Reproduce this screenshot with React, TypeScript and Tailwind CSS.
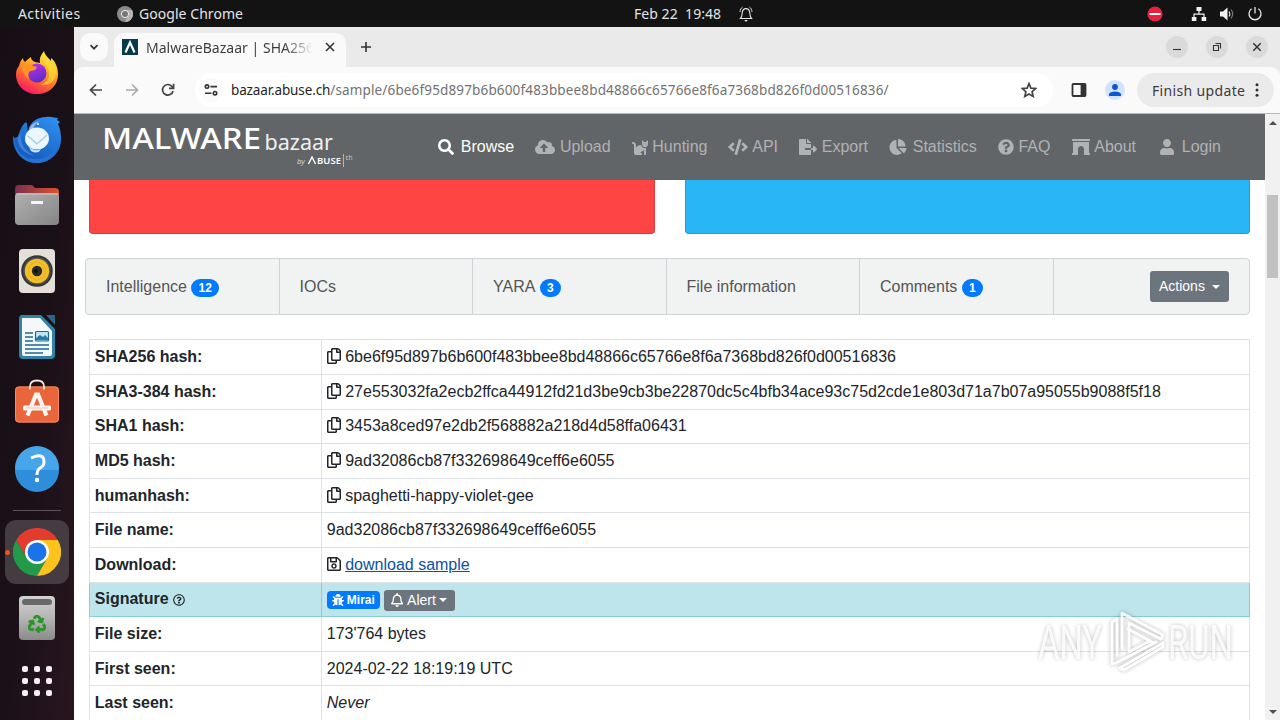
import type { ReactNode } from "react";
import {
  FaArchway,
  FaBug,
  FaCat,
  FaChartPie,
  FaCloudUploadAlt,
  FaCode,
  FaFileExport,
  FaQuestionCircle,
  FaRecycle,
  FaRegBell,
  FaRegCopy,
  FaRegQuestionCircle,
  FaRegSave,
  FaSearch,
  FaUser,
} from "react-icons/fa";

/** GNOME top bar */
function TopBar() {
  return (
    <header className="flex h-[27px] shrink-0 items-center bg-[#131313] font-['Noto_Sans',sans-serif] text-[14px] text-[#e4e4e4]">
      <span className="ml-[18px] w-[99px] tracking-[0.42px]">Activities</span>
      <svg className="mr-[6px] size-4" viewBox="0 0 16 16">
        <circle cx="8" cy="8" r="8" fill="#8b8b8b" />
        <path d="M8 4H15A8 8 0 0 1 8 16L11 10Z" fill="#b5b5b5" />
        <circle cx="8" cy="8" r="3.6" fill="#777" stroke="#eee" strokeWidth="1" />
      </svg>
      <span className="w-[495px] tracking-[0.05px]">Google Chrome</span>
      <span className="w-[104px] whitespace-pre tracking-[0.05px]">Feb 22  19:48</span>
      <svg className="size-4" viewBox="0 0 16 16" fill="none" stroke="#e4e4e4" strokeWidth="1.1">
        <path d="M2.5 12.5H13.5C12 11 12 9.5 11.8 7C11.6 4 10 2.6 8 2.6S4.4 4 4.2 7C4 9.5 4 11 2.5 12.5Z" />
        <path d="M2 6C2.2 3.6 3 2 4.6 1M14 6C13.8 3.6 13 2 11.4 1" strokeWidth="0.9" />
        <path d="M6.2 14H9.8L8 16Z" fill="#e4e4e4" stroke="none" />
      </svg>
      <svg className="ml-auto size-4" viewBox="0 0 16 16">
        <circle cx="8" cy="8" r="7.6" fill="#e6213f" />
        <path d="M2.5 8H13.5" stroke="#fff" strokeWidth="2" />
      </svg>
      <svg className="ml-[28px] size-4" viewBox="0 0 16 16">
        <path d="M5.5 1h5v4h-5zM.8 11h4.6v4H.8zM10.6 11h4.6v4h-4.6z" fill="#f2f2f2" />
        <path d="M8 5V8M3 11V8.2H13V11" fill="none" stroke="#f2f2f2" strokeWidth="1.2" />
      </svg>
      <svg className="ml-[12px] size-4" viewBox="0 0 16 16">
        <path d="M1 5.5H4L8.5 1.5V14.5L4 10.5H1Z" fill="#f2f2f2" />
        <path d="M10 5.5Q11.8 8 10 10.5" fill="none" stroke="#ddd" strokeWidth="1.2" />
        <path d="M12 3.5Q15.4 8 12 12.5" fill="none" stroke="#777" strokeWidth="1.2" />
      </svg>
      <svg className="ml-[12px] mr-[17.5px] size-4" viewBox="0 0 16 16" fill="none" stroke="#e6e6e6" strokeWidth="1.3">
        <path d="M4.6 2.8A6 6 0 1 0 11.4 2.8M8 1V7.5" />
      </svg>
    </header>
  );
}

function FirefoxIcon() {
  return (
    <svg className="size-12" viewBox="0 0 48 48">
      <defs>
        <linearGradient id="fx-body" x1="0.8" y1="0" x2="0.3" y2="1">
          <stop offset="0" stopColor="#fff44f" />
          <stop offset="0.35" stopColor="#ffb62a" />
          <stop offset="0.65" stopColor="#ff6a2c" />
          <stop offset="1" stopColor="#f5156c" />
        </linearGradient>
        <linearGradient id="fx-globe" x1="0.3" y1="0" x2="0.7" y2="1">
          <stop offset="0" stopColor="#b833e1" />
          <stop offset="1" stopColor="#592acb" />
        </linearGradient>
      </defs>
      <path
        d="M6 17C7 13 8 11 10 9C10 11 11 12 12 13C14 11 16 9 18 8C18 11 20 12 22 13L27 14C26 8 29 5 31 2C32 7 36 9 38 12C38 11 38 10 38 9C42 12 45 18 45 25C45 37 36 45 24 45S3 37 3 25C3 22 4 19 6 17Z"
        fill="url(#fx-body)"
      />
      <circle cx="24" cy="24" r="9.5" fill="url(#fx-globe)" />
      <path d="M9 15C14 13 17 14 20 17L24 18C23 21 20 22 17 22C15 24 15 26 16 30C11 27 9 22 9 15Z" fill="#ff9425" />
      <path d="M29 8C30 14 37 17 36 27C35 32 31 35 27 36C38 37 43 31 43 22C42 14 35 13 31 5Z" fill="#ffdf39" opacity=".65" />
    </svg>
  );
}

function ThunderbirdIcon() {
  return (
    <svg className="size-12" viewBox="0 -1 48 48">
      <defs>
        <linearGradient id="tb-body" x1="0.8" y1="0" x2="0.2" y2="1">
          <stop offset="0" stopColor="#2e8ff0" />
          <stop offset="1" stopColor="#1353b5" />
        </linearGradient>
      </defs>
      <path
        d="M0 20C2 23 3 22 5 20C7 15 8 10 13 6C15 8 14 13 15 15C17 6 24 1 33 1C38 0 42 2 45 2L44 4L47 6L45 8C47 12 48 17 48 23C48 37 37 47 24 47C9 47-1 35 0 20Z"
        fill="url(#tb-body)"
      />
      <path d="M1 21C2 37 13 44 25 43C36 42 43 35 44 25C46 38 36 47 24 47C9 47 0 35 1 21Z" fill="#2472d2" />
      <path d="M8 17C6 28 13 36 22 40C11 38 4 30 5 22Z" fill="#63aef7" opacity=".45" />
      <path d="M16 13Q19 6 27 5Q21 8 20 14Z" fill="#9db5ef" />
      <ellipse cx="24" cy="22.5" rx="12" ry="11" fill="#eaf7fd" />
      <path d="M15 20L24 28L34 19" fill="none" stroke="#a7cbd9" strokeWidth="1.2" />
      <path d="M16 31Q22 36 28 33Q25 39 18 35Z" fill="#bfe5fa" />
      <circle cx="25" cy="8" r="1" fill="#dff" />
    </svg>
  );
}

function FilesIcon() {
  return (
    <svg className="size-12" viewBox="0 0 48 48">
      <defs>
        <linearGradient id="fi-tab">
          <stop offset="0" stopColor="#78304f" />
          <stop offset="1" stopColor="#e2512a" />
        </linearGradient>
        <linearGradient id="fi-body" x1="0" y1="0" x2="1" y2="1">
          <stop offset="0" stopColor="#b0b0b0" />
          <stop offset="1" stopColor="#858585" />
        </linearGradient>
      </defs>
      <path d="M2 8Q2 4 6 4H18Q20 4 22 7H42Q46 7 46 11V30H2Z" fill="url(#fi-tab)" />
      <rect x="2" y="12" width="44" height="32" rx="4" fill="url(#fi-body)" />
      <path d="M3 13H45" stroke="#c9c9c9" strokeWidth="1" />
      <rect x="18" y="20" width="12" height="3" fill="#f5f5f5" />
    </svg>
  );
}

function RhythmboxIcon() {
  return (
    <svg className="size-12" viewBox="0 0 48 48">
      <rect x="6" y="2" width="36" height="44" rx="4" fill="#e4dfd9" />
      <circle cx="24" cy="24" r="15.8" fill="#343738" />
      <circle cx="24" cy="24" r="13.8" fill="#4b4f51" />
      <circle cx="24" cy="24" r="12.2" fill="#f4c02a" />
      <circle cx="24" cy="24" r="8.7" fill="none" stroke="#ecb420" strokeWidth="1.6" />
      <circle cx="24" cy="24" r="5.2" fill="#282b2e" />
      <circle cx="23" cy="24" r="2" fill="#111" />
    </svg>
  );
}

function WriterIcon() {
  return (
    <svg className="size-12" viewBox="0 0 48 48">
      <path d="M9 2H28L42 16V42Q42 46 38 46H10Q6 46 6 42V6Q6 2 9 2Z" fill="#3083a8" />
      <path d="M9 5H27L39 18V41Q39 43 37 43H11Q9 43 9 41Z" fill="#f5f8fa" />
      <path d="M33 2H42V12Z" fill="#296688" />
      <path d="M12 20H20M12 24H20M12 28H20M12 32H36M12 36H36M12 40H30" stroke="#1e678e" strokeWidth="1.7" />
      <rect x="22.5" y="18.5" width="13" height="9.5" rx="1" fill="#bfe4f3" stroke="#1f688f" strokeWidth="1.2" />
      <path d="M23 27V25L27 22L30 24L32 22L35 25V27Z" fill="#267ca6" />
    </svg>
  );
}

function SoftwareIcon() {
  return (
    <svg className="size-12" viewBox="0 1.5 48 48">
      <rect x="2" y="9" width="44" height="36" rx="4" fill="#e9653a" />
      <rect x="2.5" y="9.5" width="43" height="35" rx="3.5" fill="none" stroke="#f58a60" />
      <path d="M17 12V9Q17 3 24 3T31 9V12" fill="none" stroke="#f7e4dc" strokeWidth="1.8" />
      <path d="M14.5 38L23 17H25L33.5 38" fill="none" stroke="#fff6f2" strokeWidth="4.2" />
      <rect x="10" y="28" width="28" height="5" rx="1.5" fill="#fff6f2" />
      <path d="M13 30.5H35" stroke="#e7a289" strokeWidth="0.6" />
    </svg>
  );
}

function HelpIcon() {
  return (
    <svg className="size-12" viewBox="0 1 48 48">
      <circle cx="24" cy="24" r="22" fill="#47a5ea" />
      <path d="M2 26H46A22 22 0 0 1 2 26Z" fill="#2f8edb" />
      <path d="M18 14Q31 8 31 18Q31 22 27 24Q24 26 24 31" fill="none" stroke="#fff" strokeWidth="3" />
      <circle cx="24" cy="36" r="2.2" fill="#fff" />
    </svg>
  );
}

function ChromeIcon() {
  return (
    <svg className="size-12" viewBox="0 0 48 48">
      <path d="M24 12H44.8A24 24 0 0 0 3.2 12L13.6 30Z" fill="#e33b2e" />
      <path d="M3.2 12A24 24 0 0 0 24 48L34.4 30H13.6Z" fill="#229a49" />
      <path d="M44.8 12H24L34.4 30L24 48A24 24 0 0 0 44.8 12Z" fill="#fcc31e" />
      <circle cx="24" cy="24" r="12" fill="#fff" />
      <circle cx="24" cy="24" r="9.5" fill="#1a73e8" />
    </svg>
  );
}

function TrashIcon() {
  return (
    <div className="flex h-11 w-9 flex-col items-center rounded-[4px] bg-linear-to-b from-[#d2d2d2] via-[#b5b5b5] to-[#8a8a8a] pt-[3px]">
      <div className="h-[6px] w-[30px] rounded-[3px] bg-[#696969]" />
      <FaRecycle className="mt-[10px] size-[18px] stroke-[#2a9523] stroke-[24px] text-[#2a9523]" />
    </div>
  );
}

const dockIcons = [FirefoxIcon, ThunderbirdIcon, FilesIcon, RhythmboxIcon, WriterIcon, SoftwareIcon, HelpIcon];

function Dock() {
  return (
    <aside className="flex w-[74px] shrink-0 flex-col items-center bg-linear-to-br from-[#160e15] via-[#1a1018] to-[#29151f] pt-[13px]">
      {dockIcons.map((Icon, i) => (
        <div key={i} className="flex h-[66px] shrink-0 items-center">
          <Icon />
        </div>
      ))}
      <div className="my-2 h-px w-12 shrink-0 bg-[#5c5459]" />
      <div className="relative mt-px flex size-16 shrink-0 items-center justify-center rounded-[11px] bg-[#453c42]">
        <span className="absolute left-0 size-[5px] rounded-full bg-[#e95420]" />
        <ChromeIcon />
      </div>
      <div className="mt-px flex h-[66px] shrink-0 items-center">
        <TrashIcon />
      </div>
      <div className="mt-[15px] grid grid-cols-3 gap-[6px]">
        {Array.from({ length: 9 }, (_, i) => (
          <span key={i} className="size-[6px] rounded-[2px] bg-[#f5eff3]" />
        ))}
      </div>
    </aside>
  );
}

function WindowButton({ children }: { children: ReactNode }) {
  return (
    <span className="flex size-[22px] items-center justify-center rounded-full bg-[#dadada]">
      <svg className="size-3" viewBox="0 0 12 12" fill="none" stroke="#333" strokeWidth="1.1">
        {children}
      </svg>
    </span>
  );
}

function TabStrip() {
  return (
    <div className="flex h-10 shrink-0 items-center bg-[#eaeaea] pl-[6px] font-['Noto_Sans',sans-serif]">
      <span className="flex size-7 items-center justify-center rounded-[10px] bg-[#fafafa]">
        <svg className="size-3" viewBox="0 0 12 12" fill="none" stroke="#333" strokeWidth="1.7">
          <path d="M2.5 4.2L6 7.7L9.5 4.2" />
        </svg>
      </span>
      <div className="mt-[6px] ml-[6px] flex h-[34px] w-[232px] items-center rounded-t-[10px] bg-[#fafafa] pb-[6px] pl-2">
        <svg className="size-4" viewBox="0 0 16 16">
          <rect width="16" height="16" fill="#043a4c" />
          <path d="M3.5 13.5L8 3.5L12.5 13.5" fill="none" stroke="#fff" strokeWidth="2.2" />
        </svg>
        <span className="ml-2 w-[167px] overflow-hidden bg-linear-to-r from-[#3a3a3a] from-83% to-transparent bg-clip-text text-[14px] tracking-[0.03px] whitespace-nowrap text-transparent">
          MalwareBazaar | SHA256
        </span>
        <svg className="ml-[11px] size-3" viewBox="0 0 12 12" fill="none" stroke="#333" strokeWidth="1.6">
          <path d="M2 2L10 10M10 2L2 10" />
        </svg>
      </div>
      <svg className="ml-[14px] size-3" viewBox="0 0 12 12" fill="none" stroke="#333" strokeWidth="1.6">
        <path d="M6 1V11M1 6H11" />
      </svg>
      <div className="mr-[12px] ml-auto flex gap-[18px]">
        <WindowButton>
          <path d="M2 8.5H10" />
        </WindowButton>
        <WindowButton>
          <path d="M2.5 4.5H7.5V9.5H2.5ZM4.5 2.5H9.5V7.5" />
        </WindowButton>
        <WindowButton>
          <path d="M2.3 2.3L9.7 9.7M9.7 2.3L2.3 9.7" strokeWidth="1.5" />
        </WindowButton>
      </div>
    </div>
  );
}

function Toolbar() {
  return (
    <div className="bg-[#eaeaea]">
      <div className="flex h-[47px] shrink-0 items-center rounded-t-[9px] border-b border-[#b4bcbf] bg-[#fafafa] font-['Noto_Sans',sans-serif]">
        <svg className="ml-[14px] size-4" viewBox="0 0 16 16" fill="none" stroke="#444" strokeWidth="1.7">
          <path d="M14 8H3M8 2.5L2.5 8L8 13.5" />
        </svg>
        <svg className="ml-[20px] size-4" viewBox="0 0 16 16" fill="none" stroke="#aaa" strokeWidth="1.7">
          <path d="M2 8H13M8 2.5L13.5 8L8 13.5" />
        </svg>
        <svg className="ml-[20px] size-4" viewBox="0 0 16 16" fill="none" stroke="#444" strokeWidth="1.7">
          <path d="M13 9A5.3 5.3 0 1 1 11.8 4.3L13.3 6M13.6 1.8V6.3H9" />
        </svg>
        <div className="ml-[19px] flex h-[34px] w-[858px] items-center rounded-full bg-white pl-1">
          <span className="flex size-6 items-center justify-center rounded-full bg-[#fafafa]">
            <svg className="size-[14px]" viewBox="0 0 14 14" fill="none" stroke="#333" strokeWidth="1.6">
              <circle cx="3" cy="3.6" r="1.7" />
              <path d="M6.5 3.6H13M1 10.2H7.5" />
              <circle cx="11" cy="10.2" r="1.7" />
            </svg>
          </span>
          <span className="ml-2 w-[790px] text-[13.5px] tracking-[0.15px] whitespace-nowrap text-[#727272]">
            <span className="tracking-[-0.13px] text-[#1f1f1f]">bazaar.abuse.ch</span>
            /sample/6be6f95d897b6b600f483bbee8bd48866c65766e8f6a7368bd826f0d00516836/
          </span>
          <svg className="size-4" viewBox="0 0 16 16" fill="none" stroke="#444" strokeWidth="1.7">
            <path d="M8 1.6L9.9 6.1L14.7 6.5L11.1 9.7L12.2 14.4L8 11.9L3.8 14.4L4.9 9.7L1.3 6.5L6.1 6.1Z" />
          </svg>
        </div>
        <svg className="ml-[18px] size-4" viewBox="0 0 16 16">
          <rect x="1.5" y="2" width="13" height="12" rx="0.8" fill="none" stroke="#333" strokeWidth="1.8" />
          <path d="M9.6 2H14.5V14H9.6Z" fill="#333" />
        </svg>
        <span className="ml-[18px] flex size-5 items-center justify-center rounded-full bg-[#d3e3fd]">
          <svg className="size-[14px]" viewBox="0 0 14 14" fill="#0b57d0">
            <circle cx="7" cy="4" r="2.9" />
            <path d="M1 13V11Q2 8.4 7 8.4T13 11V13Z" />
          </svg>
        </span>
        <span className="ml-[12px] flex h-[34px] w-[137px] items-center rounded-full bg-[#ebebeb] pl-[15px] text-[14px] text-[#3c3c3c]">
          <span className="w-[96px] tracking-[0.35px] whitespace-nowrap">Finish update</span>
          <svg className="ml-[1px] size-4" viewBox="0 0 16 16" fill="#333">
            <circle cx="8" cy="2.8" r="1.5" />
            <circle cx="8" cy="8" r="1.5" />
            <circle cx="8" cy="13.2" r="1.5" />
          </svg>
        </span>
      </div>
    </div>
  );
}

function Logo() {
  return (
    <svg
      className="ml-[26px] h-[66px] w-[256px] overflow-visible font-['Noto_Sans',sans-serif]"
      viewBox="0 0 256 66"
      fill="#fff"
    >
      <text x="2" y="35" fontSize="29.5" fontWeight="500" textLength="159" lengthAdjust="spacingAndGlyphs">
        MALWARE
      </text>
      <text x="164.5" y="36" fontSize="21" fontWeight="400" fill="#eff0f0" textLength="68.5" lengthAdjust="spacingAndGlyphs">
        bazaar
      </text>
      <text x="197" y="50" fontSize="7.5" fontStyle="italic" fill="#d5d6d7">
        by
      </text>
      <path d="M208.5 50L212 43L215.5 50" fill="none" stroke="#fff" strokeWidth="1.4" />
      <text x="217" y="50" fontSize="9.5" fontWeight="600" textLength="24">
        BUSE
      </text>
      <path d="M243.5 40V53" stroke="#c9cacb" strokeWidth="0.8" />
      <text x="245.5" y="46" fontSize="6.5" fill="#c9cacb">
        ch
      </text>
    </svg>
  );
}

const navItems = [
  { label: "Browse", icon: <FaSearch className="mx-[2px] size-4" />, active: true },
  { label: "Upload", icon: <FaCloudUploadAlt className="h-4 w-5" /> },
  { label: "Hunting", icon: <FaCat className="size-4" /> },
  { label: "API", icon: <FaCode className="-ml-px h-4 w-5" /> },
  { label: "Export", icon: <FaFileExport className="h-4 w-[18px]" /> },
  { label: "Statistics", icon: <FaChartPie className="mr-px h-4 w-[18px]" /> },
  { label: "FAQ", icon: <FaQuestionCircle className="size-4" /> },
  { label: "About", icon: <FaArchway className="h-4 w-[18px]" /> },
  { label: "Login", icon: <FaUser className="mx-[3px] h-4 w-[14px]" /> },
];

function SiteNav() {
  return (
    <nav className="flex h-[66px] shrink-0 items-center bg-[#626567]">
      <Logo />
      <ul className="ml-[80.4px] flex gap-[21.35px]">
        {navItems.map((item) => (
          <li
            key={item.label}
            className={`flex items-center gap-[4.4px] whitespace-nowrap ${item.active ? "text-white" : "text-[#b0b2b3]"}`}
          >
            {item.icon}
            <span>{item.label}</span>
          </li>
        ))}
      </ul>
    </nav>
  );
}

function Caret({ className = "" }: { className?: string }) {
  return <span className={`inline-block border-x-4 border-t-4 border-x-transparent border-t-white ${className}`} />;
}

const sections = [
  { label: "Intelligence", count: 12 },
  { label: "IOCs" },
  { label: "YARA", count: 3 },
  { label: "File information" },
  { label: "Comments", count: 1 },
];

function SectionTabs() {
  return (
    <div className="mt-6 mr-[15px] ml-[11px] flex h-[57px] shrink-0 rounded-[4px] border border-[#cfd3d5] bg-[#f1f3f3] text-[#555]">
      {sections.map((section) => (
        <div key={section.label} className="flex w-[193.5px] items-center border-r border-[#cfd3d5] pl-5">
          {section.label}
          {section.count && (
            <span className="mt-[2px] ml-[4.4px] rounded-full bg-[#007bff] px-[7.2px] py-[3px] text-[12px] leading-3 font-bold text-white">
              {section.count}
            </span>
          )}
        </div>
      ))}
      <div className="flex flex-1 items-center justify-end pr-5">
        <span className="flex h-[31px] w-[79px] items-center rounded-[3px] bg-[#6c757d] pl-[9px] text-[14px] text-white">
          Actions
          <Caret className="ml-[7px]" />
        </span>
      </div>
    </div>
  );
}

function Hash({ children }: { children: string }) {
  return (
    <span className="flex items-center gap-[4.4px]">
      <FaRegCopy className="h-4 w-[14px] -translate-y-px" />
      {children}
    </span>
  );
}

const rows: { label: ReactNode; value: ReactNode; info?: boolean }[] = [
  { label: "SHA256 hash:", value: <Hash>6be6f95d897b6b600f483bbee8bd48866c65766e8f6a7368bd826f0d00516836</Hash> },
  {
    label: "SHA3-384 hash:",
    value: <Hash>27e553032fa2ecb2ffca44912fd21d3be9cb3be22870dc5c4bfb34ace93c75d2cde1e803d71a7b07a95055b9088f5f18</Hash>,
  },
  { label: "SHA1 hash:", value: <Hash>3453a8ced97e2db2f568882a218d4d58ffa06431</Hash> },
  { label: "MD5 hash:", value: <Hash>9ad32086cb87f332698649ceff6e6055</Hash> },
  { label: "humanhash:", value: <Hash>spaghetti-happy-violet-gee</Hash> },
  { label: "File name:", value: "9ad32086cb87f332698649ceff6e6055" },
  {
    label: "Download:",
    value: (
      <span className="flex items-center gap-[4.4px]">
        <FaRegSave className="h-4 w-[14px] -translate-y-px" />
        <a className="text-[#0b51a1] underline">download sample</a>
      </span>
    ),
  },
  {
    label: (
      <span className="flex items-center gap-[4.4px]">
        Signature <FaRegQuestionCircle className="mt-px size-3" />
      </span>
    ),
    value: (
      <span className="flex h-6 items-center gap-1 pt-[1.6px] text-white">
        <span className="flex h-[18px] w-[53px] items-center gap-[3px] rounded-[4px] bg-[#007bff] pl-[5px] text-[12px] font-bold">
          <FaBug className="size-3" /> Mirai
        </span>
        <span className="flex h-[21px] w-[71px] items-center rounded-[3px] bg-[#6c757d] pl-[7px] text-[14px]">
          <FaRegBell className="mr-[4px] h-[14px] w-[12.25px]" /> Alert
          <Caret className="ml-[3px]" />
        </span>
      </span>
    ),
    info: true,
  },
  { label: "File size:", value: "173'764 bytes" },
  { label: "First seen:", value: "2024-02-22 18:19:19 UTC" },
  { label: "Last seen:", value: <em>Never</em> },
];

function SampleTable() {
  return (
    <table className="mt-[24.45px] ml-[15px] w-[1161px] table-fixed border-collapse text-left leading-6 text-[#212529]">
      <tbody>
        {rows.map((row, i) => (
          <tr key={i} className={row.info ? "bg-[#bee5eb]" : ""}>
            <th
              className={`w-[232px] border p-[4.8px] font-bold ${row.info ? "border-[#86cfda]" : "border-[#dee2e6]"}`}
            >
              {row.label}
            </th>
            <td className={`border p-[4.8px] ${row.info ? "border-[#86cfda]" : "border-[#dee2e6]"}`}>{row.value}</td>
          </tr>
        ))}
      </tbody>
    </table>
  );
}

function Scrollbar() {
  return (
    <div className="flex w-[15px] shrink-0 flex-col items-center bg-[#f1f1f1]">
      <span className="mt-[7px] border-x-4 border-b-4 border-x-transparent border-b-[#505050]" />
      <span className="mt-[70px] h-[83px] w-[11px] bg-[#c1c1c1]" />
      <span className="mt-auto mb-[6px] border-x-4 border-t-4 border-x-transparent border-t-[#505050]" />
    </div>
  );
}

/** Recorder watermark that lies over the lower right corner */
function Watermark() {
  return (
    <svg
      className="absolute top-[606px] left-[1034px] h-[70px] w-[220px] overflow-visible font-['Roboto',sans-serif] opacity-80 drop-shadow-[0_0_2px_rgba(0,0,0,0.35)]"
      viewBox="0 0 220 70"
      fill="#fff"
      fillOpacity="0.85"
    >
      <text x="4" y="53" fontSize="49" textLength="64" lengthAdjust="spacingAndGlyphs">
        ANY
      </text>
      <text x="134" y="53" fontSize="49" textLength="65" lengthAdjust="spacingAndGlyphs">
        RUN
      </text>
      <g fill="none" stroke="#fff" strokeWidth="2.8" strokeLinejoin="round" strokeLinecap="round">
        <path d="M88 42V7L129 29L127 33L95 17V46L116 35" />
        <path d="M94 23L118 36" />
        <path d="M83 13L78 16V58L82 57L122 36M83 13V49" />
        <path d="M86 62L90 64L129 41V37Z" />
      </g>
    </svg>
  );
}

export default function App() {
  return (
    <div className="relative flex h-[720px] w-[1280px] flex-col overflow-hidden bg-white">
      <TopBar />
      <div className="flex min-h-0 flex-1">
        <Dock />
        <div className="flex min-w-0 flex-1 flex-col">
          <TabStrip />
          <Toolbar />
          <div className="flex min-h-0 flex-1 font-['Liberation_Sans',Arial,sans-serif] text-[16px]">
            <main className="flex min-w-0 flex-1 flex-col overflow-hidden">
              <SiteNav />
              <div className="flex h-[54px] shrink-0 gap-[30px] px-[15px]">
                <div className="flex-1 rounded-b-[4px] border border-t-0 border-[#dd3c3c] bg-[#ff4444]" />
                <div className="flex-1 rounded-b-[4px] border border-t-0 border-[#259dd3] bg-[#29b6f6]" />
              </div>
              <SectionTabs />
              <SampleTable />
            </main>
            <Scrollbar />
          </div>
        </div>
      </div>
      <Watermark />
    </div>
  );
}
